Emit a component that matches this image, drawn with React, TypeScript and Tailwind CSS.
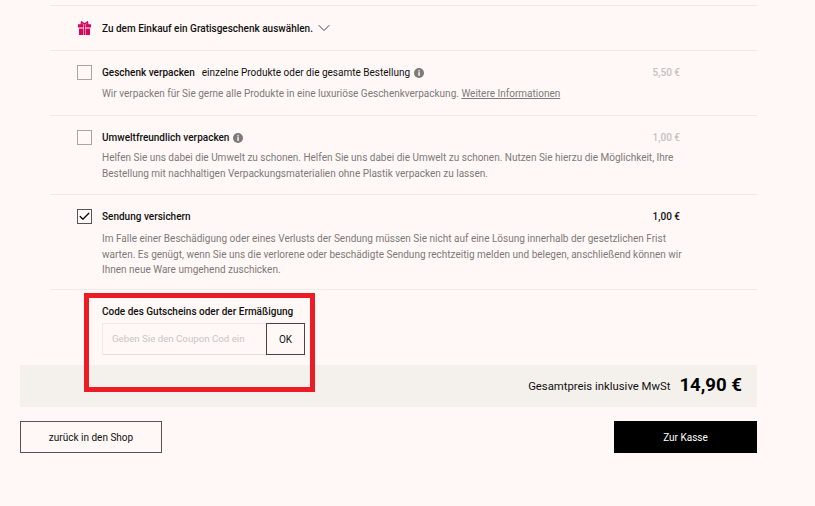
import React from 'react';
import { ChevronDown, Check } from 'lucide-react';

function Info() {
  return (
    <svg viewBox="0 0 10 10" className="w-[10px] h-[10px] ml-[4px] shrink-0">
      <circle cx="5" cy="5" r="5" fill="#7d7a79" />
      <rect x="4.3" y="4.2" width="1.5" height="3.6" fill="#fff8f6" />
      <rect x="4.3" y="2.2" width="1.5" height="1.3" fill="#fff8f6" />
    </svg>
  );
}

function Gift() {
  return (
    <svg viewBox="0 0 13 14" className="w-[13px] h-[14px] shrink-0">
      <path d="M3.5 .8 6.5 3 9.5 .8 9.9 3.2H3.1Z" fill="none" stroke="#d6065f" strokeWidth="1.2" />
      <path d="M0 3.2h13v3.4H0zM1 7.4h11V14H1z" fill="#d6065f" />
      <path d="M5.5 3.2h2V14h-2z" fill="#fff8f6" />
      <path d="M6 3.2h1V14H6z" fill="#d6065f" />
    </svg>
  );
}

function Box({ checked }: { checked?: boolean }) {
  return (
    <div className={`w-[15px] h-[15px] border flex items-center justify-center shrink-0 ${checked ? 'border-[#555]' : 'border-[#a8a5a3]'}`}>
      {checked && <Check className="w-[13px] h-[13px] text-black" strokeWidth={2.2} />}
    </div>
  );
}

export default function App() {
  return (
    <div className="relative h-[506px] w-[815px] overflow-hidden bg-[#fff8f6] font-['Roboto',sans-serif] text-[10px] text-[#111]">
      <div className="ml-5 w-[737px] pt-[5px]">
        {/* Gift */}
        <div className="ml-[30px] border-y border-[#eeeae8] h-[46px] flex items-center pl-[28px]">
          <Gift />
          <span className="ml-[11px] font-medium">Zu dem Einkauf ein Gratisgeschenk auswählen.</span>
          <ChevronDown className="w-[20px] h-[20px] ml-[1px] text-[#333]" strokeWidth={1.1} />
        </div>

        {/* Geschenk verpacken */}
        <div className="ml-[30px] border-b border-[#eeeae8] h-[65px] flex pl-[27px] pr-[77px] pt-[14px]">
          <Box />
          <div className="ml-[10px] flex-1">
            <div className="flex items-center h-[15px]">
              <span className="font-medium">Geschenk verpacken</span>
              <span className="ml-[7px]">einzelne Produkte oder die gesamte Bestellung</span>
              <Info />
              <span className="ml-auto font-medium text-[#c4c1bf]">5,50 €</span>
            </div>
            <p className="mt-[6px] leading-[16px] text-[#7d7a79]">
              Wir verpacken für Sie gerne alle Produkte in eine luxuriöse Geschenkverpackung.{' '}
              <span className="underline">Weitere Informationen</span>
            </p>
          </div>
        </div>

        {/* Umweltfreundlich */}
        <div className="ml-[30px] border-b border-[#eeeae8] h-[79px] flex pl-[27px] pr-[77px] pt-[14px]">
          <Box />
          <div className="ml-[10px] flex-1">
            <div className="flex items-center h-[15px]">
              <span className="font-medium">Umweltfreundlich verpacken</span>
              <Info />
              <span className="ml-auto font-medium text-[#c4c1bf]">1,00 €</span>
            </div>
            <p className="mt-[5px] leading-[15.5px] text-[#7d7a79]">
              Helfen Sie uns dabei die Umwelt zu schonen. Helfen Sie uns dabei die Umwelt zu schonen. Nutzen Sie hierzu die Möglichkeit, Ihre
              Bestellung mit nachhaltigen Verpackungsmaterialien ohne Plastik verpacken zu lassen.
            </p>
          </div>
        </div>

        {/* Sendung versichern */}
        <div className="ml-[30px] border-b border-[#eeeae8] h-[95px] flex pl-[27px] pr-[77px] pt-[14px]">
          <Box checked />
          <div className="ml-[10px] flex-1">
            <div className="flex items-center h-[15px]">
              <span className="font-medium">Sendung versichern</span>
              <span className="ml-auto font-medium">1,00 €</span>
            </div>
            <p className="mt-[7px] -mr-[6px] leading-[15.5px] text-[#7d7a79]">
              Im Falle einer Beschädigung oder eines Verlusts der Sendung müssen Sie nicht auf eine Lösung innerhalb der gesetzlichen Frist
              warten. Es genügt, wenn Sie uns die verlorene oder beschädigte Sendung rechtzeitig melden und belegen, anschließend können wir
              Ihnen neue Ware umgehend zuschicken.
            </p>
          </div>
        </div>

        {/* Coupon */}
        <div className="h-[75px] pl-[82px] pt-[15px]">
          <div className="font-medium leading-[14px]">Code des Gutscheins oder der Ermäßigung</div>
          <div className="mt-[4px] flex h-[32px] w-[203px]">
            <div className="flex-1 border border-r-0 border-[#eeeae8] border-b-[#e2dedb] pl-[9px] flex items-center text-[9.7px] text-[#c9c6c4]">Geben Sie den Coupon Cod ein</div>
            <div className="w-[39px] border border-[#444] flex items-center justify-center">OK</div>
          </div>
        </div>

        {/* Total */}
        <div className="h-[42px] bg-[#f4f0ec] flex items-center justify-end pr-[15px]">
          <span className="text-[11.33px]">Gesamtpreis inklusive MwSt</span>
          <span className="ml-[9px] text-[18.6px] font-bold text-black">14,90 €</span>
        </div>

        {/* Buttons */}
        <div className="mt-[14px] flex justify-between">
          <div className="w-[142px] h-[32px] border border-[#555] flex items-center justify-center">zurück in den Shop</div>
          <div className="w-[143px] h-[32px] bg-black text-white flex items-center justify-center">Zur Kasse</div>
        </div>
      </div>

      {/* Red annotation */}
      <div className="absolute left-[84px] top-[293px] w-[231px] h-[99px] border-[5px] border-[#ed1c24]" />
    </div>
  );
}
